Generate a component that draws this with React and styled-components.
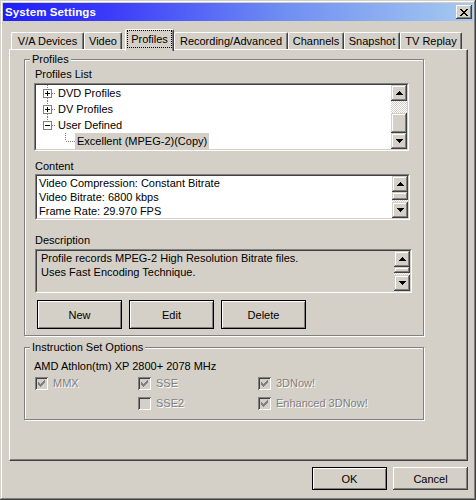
import React from 'react'
import styled, {createGlobalStyle, css} from 'styled-components'

const face = '#d4d0c8'
const shadow = '#808080'
const darkShadow = '#404040'
const highlight = '#ffffff'

const GlobalStyle = createGlobalStyle`
  html, body {
    margin: 0;
    padding: 0;
    background: ${face};
  }
  body {
    font-family: "Liberation Sans", Arial, sans-serif;
    font-size: 11px;
    color: #000;
  }
`

const Window = styled.div`
  box-sizing: border-box;
  width: 476px;
  height: 500px;
  padding: 3px;
  background: ${face};
  box-shadow: inset -1px -1px ${darkShadow}, inset 1px 1px ${face},
    inset -2px -2px ${shadow}, inset 2px 2px ${highlight};
  display: flex;
  flex-direction: column;
`
const TitleBar = styled.div`
  flex: none;
  height: 18px;
  display: flex;
  align-items: center;
  justify-content: space-between;
  padding: 0 1px 0 2px;
  background: linear-gradient(to right, #1e1efb 0%, #3a3afa 22%, #6f8ff2 60%, #a6caf0 100%);
`
const Title = styled.span`
  color: #fff;
  font-weight: bold;
  font-size: 11.5px;
  letter-spacing: 0.1px;
`
const CloseButton = styled.div`
  box-sizing: border-box;
  width: 16px;
  height: 14px;
  background: ${face};
  display: flex;
  align-items: center;
  justify-content: center;
  box-shadow: inset -1px -1px ${darkShadow}, inset 1px 1px ${highlight},
    inset -2px -2px ${shadow};
`

const Body = styled.div`
  flex: 1;
  display: flex;
  flex-direction: column;
  padding: 8px 5px 7px 6px;
`
const TabRow = styled.div`
  flex: none;
  height: 20px;
  display: flex;
  align-items: flex-end;
  padding-left: 2px;
`
const Tab = styled.div`
  box-sizing: border-box;
  flex: none;
  width: ${p => p.$w}px;
  height: 17px;
  line-height: 15px;
  padding-top: 1px;
  text-align: center;
  background: ${face};
  border-top: 1px solid ${highlight};
  border-left: 1px solid ${highlight};
  border-right: 1px solid ${darkShadow};
  border-radius: 2px 2px 0 0;
  box-shadow: inset -1px 0 ${shadow};
  white-space: nowrap;
  ${p =>
    p.$active &&
    css`
      position: relative;
      z-index: 1;
      height: 22px;
      margin-left: 3px;
      margin-bottom: -2px;
      padding-top: 0;
      display: flex;
      justify-content: center;
      align-items: flex-start;
    `}
`
const FocusLabel = styled.span`
  display: block;
  line-height: 16px;
  padding: 0 3px;
  border: 1px dotted #000;
`

const Panel = styled.div`
  flex: 1;
  box-sizing: border-box;
  padding: 3px 0 0 14px;
  border-top: 1px solid ${highlight};
  border-left: 1px solid ${highlight};
  border-right: 1px solid ${darkShadow};
  border-bottom: 1px solid ${darkShadow};
  box-shadow: inset -1px -1px ${shadow};
`

const GroupBox = styled.fieldset`
  box-sizing: border-box;
  width: 400px;
  min-width: 0;
  margin: ${p => p.$top || 0}px 0 0 0;
  padding: 0;
  border: 1px solid ${shadow};
  box-shadow: inset 1px 1px ${highlight}, 1px 1px ${highlight};
`
const Legend = styled.legend`
  margin-left: 5px;
  padding: 0 2px;
  line-height: 13px;
  background: ${face};
`
const GroupBody = styled.div`
  padding: 0 0 ${p => p.$bottom}px 9px;
`
const FieldLabel = styled.div`
  line-height: 13px;
  margin: ${p => p.$top}px 0 ${p => p.$bottom}px 1px;
`

const Sunken = styled.div`
  box-sizing: border-box;
  width: ${p => p.$w}px;
  height: ${p => p.$h}px;
  margin-left: ${p => p.$left || 0}px;
  border-top: 1px solid ${shadow};
  border-left: 1px solid ${shadow};
  border-right: 1px solid ${highlight};
  border-bottom: 1px solid ${highlight};
`
const SunkenInner = styled.div`
  box-sizing: border-box;
  height: 100%;
  display: flex;
  background: ${p => (p.$readOnly ? face : '#fff')};
  border-top: 1px solid ${darkShadow};
  border-left: 1px solid ${darkShadow};
  border-right: 1px solid ${face};
  border-bottom: 1px solid ${face};
`
const ListArea = styled.div`
  flex: 1;
  min-width: 0;
  overflow: hidden;
  padding-left: ${p => p.$pad}px;
  line-height: 14px;
  white-space: nowrap;
`

const ScrollBar = styled.div`
  flex: none;
  width: 16px;
  display: flex;
  flex-direction: column;
`
const ScrollButton = styled.div`
  box-sizing: border-box;
  flex: none;
  height: 16px;
  background: ${face};
  display: flex;
  align-items: center;
  justify-content: center;
  box-shadow: inset -1px -1px ${darkShadow}, inset 1px 1px ${face},
    inset -2px -2px ${shadow}, inset 2px 2px ${highlight};
`
const Track = styled.div`
  flex: none;
  height: ${p => p.$h}px;
  background-image: repeating-conic-gradient(#fff 0 25%, ${face} 0 50%);
  background-size: 2px 2px;
`
const Thumb = styled.div`
  box-sizing: border-box;
  flex: none;
  height: ${p => p.$h}px;
  background: ${face};
  box-shadow: inset -1px -1px ${darkShadow}, inset 1px 1px ${face},
    inset -2px -2px ${shadow}, inset 2px 2px ${highlight};
`

const TreeRow = styled.div`
  display: flex;
  align-items: center;
  height: 16px;
`
const TreeLabel = styled.span`
  line-height: 16px;
  padding: 0 2px;
  background: ${p => (p.$selected ? face : 'transparent')};
`

const ButtonRow = styled.div`
  display: flex;
  gap: ${p => p.$gap}px;
  margin: ${p => p.$top || 0}px 0 0 ${p => p.$left || 0}px;
  justify-content: ${p => p.$end ? 'flex-end' : 'flex-start'};
`
const Button = styled.div`
  box-sizing: border-box;
  width: ${p => p.$w}px;
  height: ${p => p.$h}px;
  display: flex;
  align-items: center;
  justify-content: center;
  background: ${face};
  ${p =>
    p.$framed
      ? css`
          border: 1px solid #000;
          box-shadow: inset 1px 1px ${highlight}, inset -1px -1px ${shadow};
        `
      : css`
          box-shadow: inset -1px -1px ${darkShadow}, inset 1px 1px ${highlight},
            inset -2px -2px ${shadow}, inset 2px 2px ${face};
        `}
`

const CpuLine = styled.div`
  line-height: 13px;
  margin: 6px 0 2px 0;
`
const CheckGrid = styled.div`
  display: grid;
  grid-template-columns: 103px 120px 1fr;
  grid-auto-rows: 16px;
  row-gap: 4px;
  margin-left: 1px;
`
const CheckItem = styled.div`
  display: flex;
  align-items: center;
  gap: 5px;
  grid-column: ${p => p.$col};
  grid-row: ${p => p.$row};
`
const CheckBox = styled.span`
  box-sizing: border-box;
  width: 13px;
  height: 13px;
  display: flex;
  align-items: center;
  justify-content: center;
  background: ${face};
  box-shadow: inset 1px 1px ${shadow}, inset -1px -1px ${highlight},
    inset 2px 2px ${darkShadow}, inset -2px -2px ${face};
`
const DisabledText = styled.span`
  color: ${shadow};
  text-shadow: 1px 1px 0 ${highlight};
`

const Footer = styled.div`
  flex: none;
  margin-top: 6px;
`

const Arrow = ({down}) => (
  <svg width="7" height="4" viewBox="0 0 7 4" shapeRendering="crispEdges">
    <path
      fill="#000"
      d={
        down
          ? 'M0 0h7v1H0z M1 1h5v1H1z M2 2h3v1H2z M3 3h1v1H3z'
          : 'M3 0h1v1H3z M2 1h3v1H2z M1 2h5v1H1z M0 3h7v1H0z'
      }
    />
  </svg>
)

const Scroller = ({before, thumb, after}) => (
  <ScrollBar>
    <ScrollButton>
      <Arrow />
    </ScrollButton>
    {before > 0 && <Track $h={before} />}
    <Thumb $h={thumb} />
    {after > 0 && <Track $h={after} />}
    <ScrollButton>
      <Arrow down />
    </ScrollButton>
  </ScrollBar>
)

const dots = {stroke: shadow, strokeDasharray: '1 1', strokeWidth: 1}

// gutter of one root item: dotted trunk, +/- box, dotted twig to the label
const RootGutter = ({open, last}) => (
  <svg width="20" height="16" viewBox="0 0 20 16" shapeRendering="crispEdges">
    <line x1="11.5" y1="0" x2="11.5" y2="4" {...dots} />
    {!last && <line x1="11.5" y1="13" x2="11.5" y2="16" {...dots} />}
    <line x1="16" y1="8.5" x2="20" y2="8.5" {...dots} />
    <rect x="7.5" y="4.5" width="8" height="8" fill="#fff" stroke={shadow} />
    <line x1="9" y1="8.5" x2="14" y2="8.5" stroke="#000" />
    {!open && <line x1="11.5" y1="6" x2="11.5" y2="11" stroke="#000" />}
  </svg>
)

const ChildGutter = () => (
  <svg width="39" height="16" viewBox="0 0 39 16" shapeRendering="crispEdges">
    <line x1="29.5" y1="0" x2="29.5" y2="8" {...dots} />
    <line x1="30" y1="8.5" x2="39" y2="8.5" {...dots} />
  </svg>
)

const Check = () => (
  <svg width="7" height="7" viewBox="0 0 7 7" shapeRendering="crispEdges">
    <path
      fill={shadow}
      d="M6 0h1v3H6z M5 1h1v3H5z M4 2h1v3H4z M3 3h1v3H3z M2 4h1v3H2z M1 3h1v3H1z M0 2h1v3H0z"
    />
  </svg>
)

const tabs = [
  {label: 'V/A Devices', w: 73},
  {label: 'Video', w: 38},
  {label: 'Profiles', w: 49, active: true},
  {label: 'Recording/Advanced', w: 114},
  {label: 'Channels', w: 56},
  {label: 'Snapshot', w: 56},
  {label: 'TV Replay', w: 62},
]

const checks = [
  {label: 'MMX', col: 1, row: 1, on: true},
  {label: 'SSE', col: 2, row: 1, on: true},
  {label: '3DNow!', col: 3, row: 1, on: true},
  {label: 'SSE2', col: 2, row: 2, on: false},
  {label: 'Enhanced 3DNow!', col: 3, row: 2, on: true},
]

const App = () => (
  <React.Fragment>
    <GlobalStyle />
    <Window>
      <TitleBar>
        <Title>System Settings</Title>
        <CloseButton>
          <svg width="8" height="7" viewBox="0 0 8 7" shapeRendering="crispEdges">
            <path
              fill="#000"
              d="M0 0h2v1H0z M6 0h2v1H6z M1 1h2v1H1z M5 1h2v1H5z M2 2h4v1H2z M3 3h2v1H3z M2 4h4v1H2z M1 5h2v1H1z M5 5h2v1H5z M0 6h2v1H0z M6 6h2v1H6z"
            />
          </svg>
        </CloseButton>
      </TitleBar>
      <Body>
        <TabRow>
          {tabs.map(t => (
            <Tab key={t.label} $w={t.w} $active={t.active}>
              {t.active ? <FocusLabel>{t.label}</FocusLabel> : t.label}
            </Tab>
          ))}
        </TabRow>
        <Panel>
          <GroupBox>
            <Legend>Profiles</Legend>
            <GroupBody $bottom={6}>
              <FieldLabel $top={2} $bottom={2}>Profiles List</FieldLabel>
              <Sunken $w={375} $h={68}>
                <SunkenInner>
                  <ListArea $pad={0}>
                    <TreeRow>
                      <RootGutter />
                      <TreeLabel>DVD Profiles</TreeLabel>
                    </TreeRow>
                    <TreeRow>
                      <RootGutter />
                      <TreeLabel>DV Profiles</TreeLabel>
                    </TreeRow>
                    <TreeRow>
                      <RootGutter open last />
                      <TreeLabel>User Defined</TreeLabel>
                    </TreeRow>
                    <TreeRow>
                      <ChildGutter />
                      <TreeLabel $selected>Excellent (MPEG-2)(Copy)</TreeLabel>
                    </TreeRow>
                  </ListArea>
                  <Scroller before={12} thumb={20} after={0} />
                </SunkenInner>
              </Sunken>

              <FieldLabel $top={9} $bottom={1}>Content</FieldLabel>
              <Sunken $w={375} $h={46} $left={1}>
                <SunkenInner>
                  <ListArea $pad={2}>
                    <div>Video Compression: Constant Bitrate</div>
                    <div>Video Bitrate: 6800 kbps</div>
                    <div>Frame Rate: 29.970 FPS</div>
                  </ListArea>
                  <Scroller before={0} thumb={8} after={2} />
                </SunkenInner>
              </Sunken>

              <FieldLabel $top={14} $bottom={2}>Description</FieldLabel>
              <Sunken $w={377} $h={44} $left={1}>
                <SunkenInner $readOnly>
                  <ListArea $pad={4}>
                    <div>Profile records MPEG-2 High Resolution Bitrate files.</div>
                    <div>Uses Fast Encoding Technique.</div>
                  </ListArea>
                  <Scroller before={0} thumb={6} after={2} />
                </SunkenInner>
              </Sunken>

              <ButtonRow $gap={7} $top={7} $left={3}>
                <Button $framed $w={85} $h={29}>New</Button>
                <Button $framed $w={85} $h={29}>Edit</Button>
                <Button $framed $w={85} $h={29}>Delete</Button>
              </ButtonRow>
            </GroupBody>
          </GroupBox>

          <GroupBox $top={5}>
            <Legend>Instruction Set Options</Legend>
            <GroupBody $bottom={8}>
              <CpuLine>AMD Athlon(tm) XP 2800+ 2078 MHz</CpuLine>
              <CheckGrid>
                {checks.map(c => (
                  <CheckItem key={c.label} $col={c.col} $row={c.row}>
                    <CheckBox>{c.on && <Check />}</CheckBox>
                    <DisabledText>{c.label}</DisabledText>
                  </CheckItem>
                ))}
              </CheckGrid>
            </GroupBody>
          </GroupBox>
        </Panel>
        <Footer>
          <ButtonRow $gap={6} $end>
            <Button $framed $w={75} $h={23}>OK</Button>
            <Button $w={75} $h={23}>Cancel</Button>
          </ButtonRow>
        </Footer>
      </Body>
    </Window>
  </React.Fragment>
)

export default App
